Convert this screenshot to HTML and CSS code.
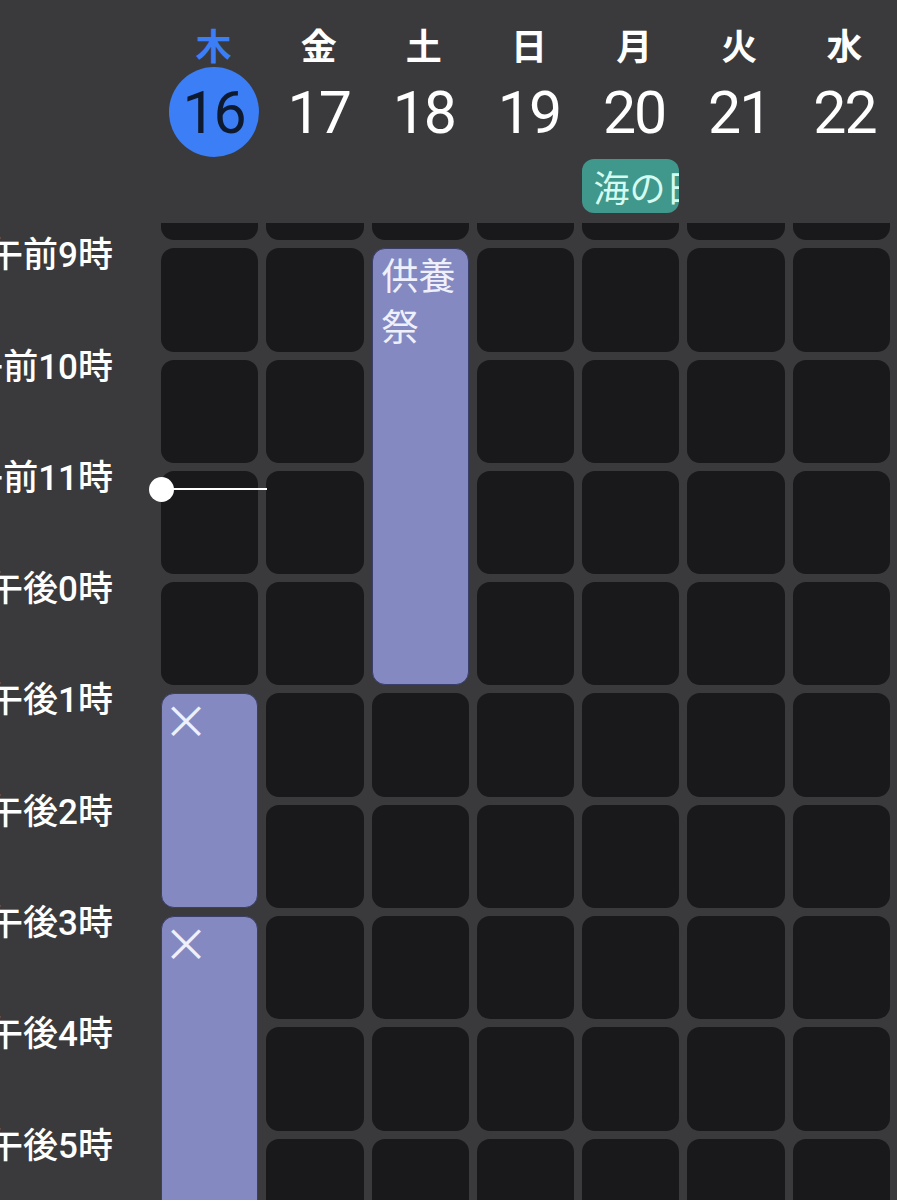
FILE: index.html
```html
<!DOCTYPE html>
<html lang="ja">
<head>
    <meta charset="UTF-8">
    <meta name="viewport" content="width=device-width, initial-scale=1.0">
    <title>週表示</title>
    <link rel="stylesheet" href="styles.css">
</head>
<body>
    <div class="app">
        <!-- Week header -->
        <header class="week-head">
            <div class="gutter"></div>
            <div class="day today"><span class="dow">木</span><span class="date">16</span></div>
            <div class="day"><span class="dow">金</span><span class="date">17</span></div>
            <div class="day"><span class="dow">土</span><span class="date">18</span></div>
            <div class="day"><span class="dow">日</span><span class="date">19</span></div>
            <div class="day">
                <span class="dow">月</span><span class="date">20</span>
                <span class="holiday">海の日</span>
            </div>
            <div class="day"><span class="dow">火</span><span class="date">21</span></div>
            <div class="day"><span class="dow">水</span><span class="date">22</span></div>
        </header>

        <!-- Scrolled time grid -->
        <main class="scroller">
            <div class="timeline">
                <div class="event ev-kuyo">供養祭</div>
                <div class="event ev-x1"><span class="mark">×</span></div>
                <div class="event ev-x2"><span class="mark">×</span></div>

                <div class="hour"><span>午前8時</span></div>
                <div class="cell"></div><div class="cell"></div><div class="cell"></div><div class="cell"></div>
                <div class="cell"></div><div class="cell"></div><div class="cell"></div>

                <div class="hour"><span>午前9時</span></div>
                <div class="cell"></div><div class="cell"></div><div class="cell"></div>
                <div class="cell"></div><div class="cell"></div><div class="cell"></div>

                <div class="hour"><span>午前10時</span></div>
                <div class="cell"></div><div class="cell"></div><div class="cell"></div>
                <div class="cell"></div><div class="cell"></div><div class="cell"></div>

                <div class="hour"><span>午前11時</span></div>
                <div class="cell now"><div class="now-line"></div></div>
                <div class="cell"></div><div class="cell"></div>
                <div class="cell"></div><div class="cell"></div><div class="cell"></div>

                <div class="hour"><span>午後0時</span></div>
                <div class="cell"></div><div class="cell"></div><div class="cell"></div>
                <div class="cell"></div><div class="cell"></div><div class="cell"></div>

                <div class="hour"><span>午後1時</span></div>
                <div class="cell"></div><div class="cell"></div><div class="cell"></div>
                <div class="cell"></div><div class="cell"></div><div class="cell"></div>

                <div class="hour"><span>午後2時</span></div>
                <div class="cell"></div><div class="cell"></div><div class="cell"></div>
                <div class="cell"></div><div class="cell"></div><div class="cell"></div>

                <div class="hour"><span>午後3時</span></div>
                <div class="cell"></div><div class="cell"></div><div class="cell"></div>
                <div class="cell"></div><div class="cell"></div><div class="cell"></div>

                <div class="hour"><span>午後4時</span></div>
                <div class="cell"></div><div class="cell"></div><div class="cell"></div>
                <div class="cell"></div><div class="cell"></div><div class="cell"></div>

                <div class="hour"><span>午後5時</span></div>
                <div class="cell"></div><div class="cell"></div><div class="cell"></div>
                <div class="cell"></div><div class="cell"></div><div class="cell"></div>

                <div class="hour"><span>午後6時</span></div>
                <div class="cell"></div><div class="cell"></div><div class="cell"></div>
                <div class="cell"></div><div class="cell"></div><div class="cell"></div>
            </div>
        </main>
    </div>
</body>
</html>
```

FILE: styles.css
```css
body {
    margin: 0;
    background-color: #3a3a3c;
    color: #ffffff;
    font-family: "Noto Sans CJK JP", "Noto Sans", sans-serif;
    overflow: hidden;
}

.app {
    width: 897px;
    height: 1200px;
    overflow: hidden;
}

/* Header */

.week-head {
    display: grid;
    grid-template-columns: 161px repeat(7, minmax(0, 1fr));
    height: 223px;
}

.day {
    display: flex;
    flex-direction: column;
    align-items: center;
    min-width: 0;
    padding-top: 21px;
}

.dow {
    font-size: 36px;
    font-weight: 700;
    line-height: 46px;
}

.date {
    width: 90px;
    height: 90px;
    border-radius: 50%;
    display: flex;
    align-items: center;
    justify-content: center;
    font-family: Roboto, "Noto Sans", sans-serif;
    font-size: 59px;
    letter-spacing: -2px;
}

.today .dow {
    color: #3b7ef5;
}

.today .date {
    background-color: #3b7ef5;
    color: #0d1a30;
}

.holiday {
    align-self: stretch;
    margin: 2px 8px 0 0;
    height: 54px;
    padding-left: 12px;
    border-radius: 12px;
    background-color: #40978b;
    color: #d4fbf1;
    font-size: 36px;
    line-height: 54px;
    white-space: nowrap;
    overflow: hidden;
}

/* Time grid */

.scroller {
    height: 977px;
    overflow: hidden;
}

.timeline {
    display: grid;
    grid-template-columns: 153px repeat(7, minmax(0, 1fr));
    grid-auto-rows: 103.3px;
    column-gap: 8px;
    row-gap: 8px;
    padding-right: 7px;
    margin-top: -86px;
}

.hour {
    display: flex;
    justify-content: flex-end;
    align-items: flex-start;
    padding-right: 40px;
    white-space: nowrap;
    font-family: Roboto, "Noto Sans CJK JP", sans-serif;
    font-size: 35px;
    font-weight: 500;
    line-height: 34px;
}

.hour span {
    margin-top: -9px;
}

.cell {
    background-color: #19191b;
    border-radius: 13px;
}

.now {
    position: relative;
}

.now-line {
    position: absolute;
    top: 17px;
    left: 0;
    width: calc(100% + 9px);
    height: 2px;
    background-color: #ffffff;
    z-index: 2;
}

.now-line::before {
    content: "";
    position: absolute;
    left: -12px;
    top: -11px;
    width: 25px;
    height: 25px;
    border-radius: 50%;
    background-color: #ffffff;
}

.event {
    background-color: #8489c1;
    color: #eef0fb;
    border: 1px solid #3a3f6a;
    border-radius: 13px;
    padding-left: 9px;
    font-size: 37px;
    line-height: 51px;
}

.mark {
    display: block;
    margin-left: -8px;
    font-size: 46px;
    line-height: 48px;
}

.ev-kuyo {
    grid-column: 4;
    grid-row: 2 / span 4;
}

.ev-x1 {
    grid-column: 2;
    grid-row: 6 / span 2;
}

.ev-x2 {
    grid-column: 2;
    grid-row: 8 / span 4;
}
```
